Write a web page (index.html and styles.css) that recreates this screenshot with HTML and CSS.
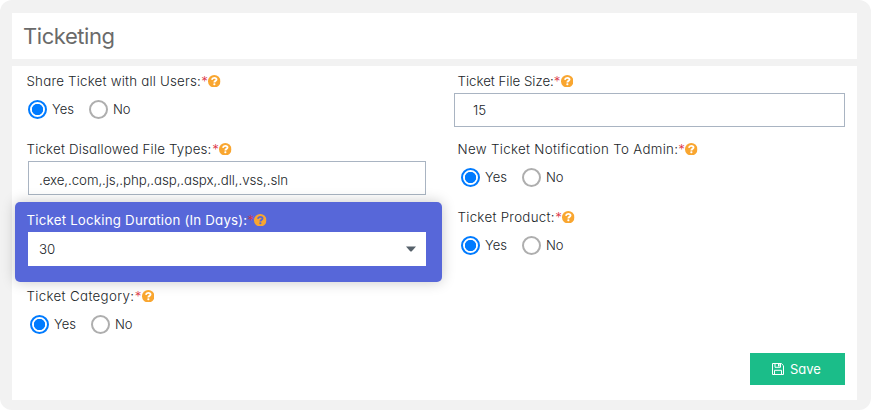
FILE: index.html
```
<!DOCTYPE html>
<html lang="en">
<head>
<meta charset="utf-8">
<title>Ticketing</title>
<link rel="stylesheet" href="styles.css">
</head>
<body>
<svg class="defs" width="0" height="0" aria-hidden="true">
  <symbol id="help" viewBox="0 0 12 12">
    <circle cx="6" cy="6" r="6" fill="#f9a630"/>
    <path d="M3.700 4.500C4 3.200 4.900 2.700 6 2.700c1.300 0 2.200.7 2.200 1.700C8.200 5.700 6.100 5.600 6.100 7.100" fill="none" stroke="currentColor" stroke-width="1.800"/>
    <rect x="5.100" y="7.900" width="2" height="1.900" rx=".8" fill="currentColor"/>
  </symbol>
</svg>
<div class="app">
  <header class="header"><h1>Ticketing</h1></header>
  <main class="panel">
    <div class="columns">
      <div class="col left">
        <div class="label share"><span>Share Ticket with all Users:</span><i>*</i><svg><use href="#help"/></svg></div>
        <div class="radios first"><label><b class="dot on"></b>Yes</label><label><b class="dot"></b>No</label></div>
        <div class="label types"><span>Ticket Disallowed File Types:</span><i>*</i><svg><use href="#help"/></svg></div>
        <div class="field files">.exe,.com,.js,.php,.asp,.aspx,.dll,.vss,.sln</div>
        <section class="highlight">
          <div class="label locking"><span>Ticket Locking Duration (In Days):</span><i>*</i><svg><use href="#help"/></svg></div>
          <div class="select">30<svg class="caret" viewBox="0 0 10 6"><path d="M0 .5h10L5.800 5.200q-.8.700-1.600 0z" fill="#56616a"/></svg></div>
        </section>
        <div class="label category"><span>Ticket Category:</span><i>*</i><svg><use href="#help"/></svg></div>
        <div class="radios"><label><b class="dot on"></b>Yes</label><label><b class="dot"></b>No</label></div>
      </div>
      <div class="col right">
        <div class="label size"><span>Ticket File Size:</span><i>*</i><svg><use href="#help"/></svg></div>
        <div class="field amount">15</div>
        <div class="label admin"><span>New Ticket Notification To Admin:</span><i>*</i><svg><use href="#help"/></svg></div>
        <div class="radios"><label><b class="dot on"></b>Yes</label><label><b class="dot"></b>No</label></div>
        <div class="label product"><span>Ticket Product:</span><i>*</i><svg><use href="#help"/></svg></div>
        <div class="radios"><label><b class="dot on"></b>Yes</label><label><b class="dot"></b>No</label></div>
      </div>
    </div>
    <button class="save"><svg viewBox="0 0 12 12" fill="none" stroke="currentColor"><path d="M.5.5h8.800l2.200 2.200v8.800H.5zM3 .5v3.800h5.500V.5M2.500 11.500V7.300h7v4.200"/><path d="M6.800 1v2.500" stroke-width="1.600"/></svg><span>Save</span></button>
  </main>
</div>
</body>
</html>
```
FILE: styles.css
```
* { box-sizing: border-box; }
body {
  margin: 0;
  background: #fff;
  font: 300 13.3px/20px Inter, "Open Sans", sans-serif;
  font-feature-settings: "cv11";
  color: #212529;
}
.defs { display: block; }
.app {
  height: 410px;
  padding: 13px 14px 10px 12px;
  background: #f2f2f2;
  border-radius: 12px;
}
.header {
  height: 46px;
  padding: 6px 11px;
  margin-bottom: 7px;
  background: #fff;
}
h1 {
  margin: 0;
  font-size: 22px;
  line-height: 34px;
  font-weight: 400;
  letter-spacing: -.45px;
  color: #6a6a6a;
}
.panel {
  display: flex;
  flex-direction: column;
  height: 334px;
  background: #fff;
}
.columns { display: flex; height: 287px; }
.col { padding-top: 5px; }
.left { width: 430px; padding-left: 3px; margin-right: 12px; }
.right { width: 391px; }
.label {
  display: flex;
  align-items: center;
  height: 20px;
  padding-left: 11.5px;
  white-space: nowrap;
}
.right .label { padding-left: 3.5px; }
.label span { flex: none; }
.label i {
  width: 7px;
  font-style: normal;
  text-align: center;
  color: #dc3545;
}
.label svg { flex: none; width: 12.5px; height: 12.5px; color: #fff; }
.share span { width: 174.500px; letter-spacing: .214px; }
.types span { width: 185.500px; letter-spacing: .196px; }
.locking span { width: 220.500px; letter-spacing: .2px; font-weight: 400; }
.category span { width: 108px; letter-spacing: .34px; }
.size span { width: 96px; letter-spacing: -.015px; }
.admin span { width: 220.500px; letter-spacing: .323px; }
.product span { width: 97.500px; letter-spacing: .292px; }
.radios {
  display: flex;
  height: 19px;
  margin: 9px 0 20px;
  padding-left: 15px;
  font-size: 13px;
  line-height: 19px;
}
.right .radios { padding-left: 7px; }
.radios.first { padding-left: 13px; }
.radios label { display: flex; width: 61px; }
.dot {
  width: 19px;
  height: 19px;
  margin-right: 5px;
  border: 2px solid #aeaeae;
  border-radius: 50%;
}
.dot.on {
  border-color: #007bff;
  background: radial-gradient(circle, #007bff 5.300px, #fff 6px);
}
.field {
  height: 34px;
  border: 1px solid #a9b4c2;
  line-height: 36px;
}
.files {
  width: 398px;
  margin: 2px 0 7px 13px;
  padding-left: 10px;
  letter-spacing: -.069px;
}
.amount { margin: 2px 0 12px; padding-left: 18px; line-height: 32px; }
.highlight {
  width: 427px;
  height: 80px;
  padding-top: 8px;
  margin-bottom: 4px;
  background: #5767d9;
  border-radius: 5px;
  box-shadow: 0 0 14px rgba(0, 0, 0, .22);
  color: #fff;
}
.highlight .label svg { color: #5767d9; }
.select {
  display: flex;
  align-items: center;
  justify-content: space-between;
  width: 398px;
  height: 34px;
  margin: 2px 0 0 13px;
  padding: 0 10px 0 11px;
  background: #fff;
  color: #212529;
}
.caret { width: 10px; height: 6px; }
.save {
  display: flex;
  align-items: center;
  align-self: flex-end;
  width: 95px;
  height: 32px;
  margin-right: 12px;
  padding: 0 0 0 22px;
  border: 0;
  background: #1bbd89;
  color: #fff;
  font: 400 13px/32px Inter, "Open Sans", sans-serif;
  font-feature-settings: "cv11";
}
.save svg { width: 12px; height: 12px; margin-right: 6px; }
```
